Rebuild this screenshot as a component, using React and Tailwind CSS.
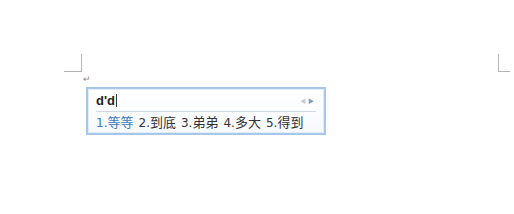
export default function App() {
  const cands = ['等等', '到底', '弟弟', '多大', '得到'];

  return (
    <div className="w-[514px] h-[214px] bg-white relative overflow-hidden" style={{ fontFamily: '"Liberation Sans", "Noto Sans CJK SC", sans-serif' }}>
      {/* page corner marks */}
      <div className="absolute left-[64px] top-[54px] w-[18px] h-[18px] border-r border-b border-[#b4b4b4]" />
      <div className="absolute left-[498px] top-[54px] w-[12px] h-[18px] border-l border-b border-[#b4b4b4]" />
      <div className="absolute left-[83px] top-[75px] text-[9px] leading-none text-[#8a8a8a]">↵</div>

      {/* IME candidate window */}
      <div className="absolute left-[86px] top-[87px] w-[240px] border-2 border-[#a8c6e8] bg-white">
        <div className="border border-[#e4edf7] bg-gradient-to-b from-white to-[#f6f9fd] px-[7px]">
          <div className="flex items-center justify-between h-[22px] border-b border-[#cfd8e3]">
            <div className="flex items-center text-[13px] font-bold text-[#222]">
              <span>d'd</span>
              <span className="ml-[1px] w-px h-[13px] bg-[#333]" />
            </div>
            <div className="flex items-center gap-[2px] text-[6px] leading-none mr-[2px]">
              <span className="text-[#c8ccd2]">◀</span>
              <span className="text-[#7d9bc4]">▶</span>
            </div>
          </div>
          <div className="flex items-center gap-[5px] h-[20px] text-[13px] leading-none text-[#333]" style={{ fontFamily: '"Noto Sans CJK SC", sans-serif' }}>
            {cands.map((c, i) => (
              <span key={i} className={i === 0 ? 'text-[#3f78c0]' : ''}>
                <span className="text-[12px]" style={{ fontFamily: '"DejaVu Sans", sans-serif' }}>{i + 1}.</span>
                {c}
              </span>
            ))}
          </div>
        </div>
      </div>
    </div>
  );
}
